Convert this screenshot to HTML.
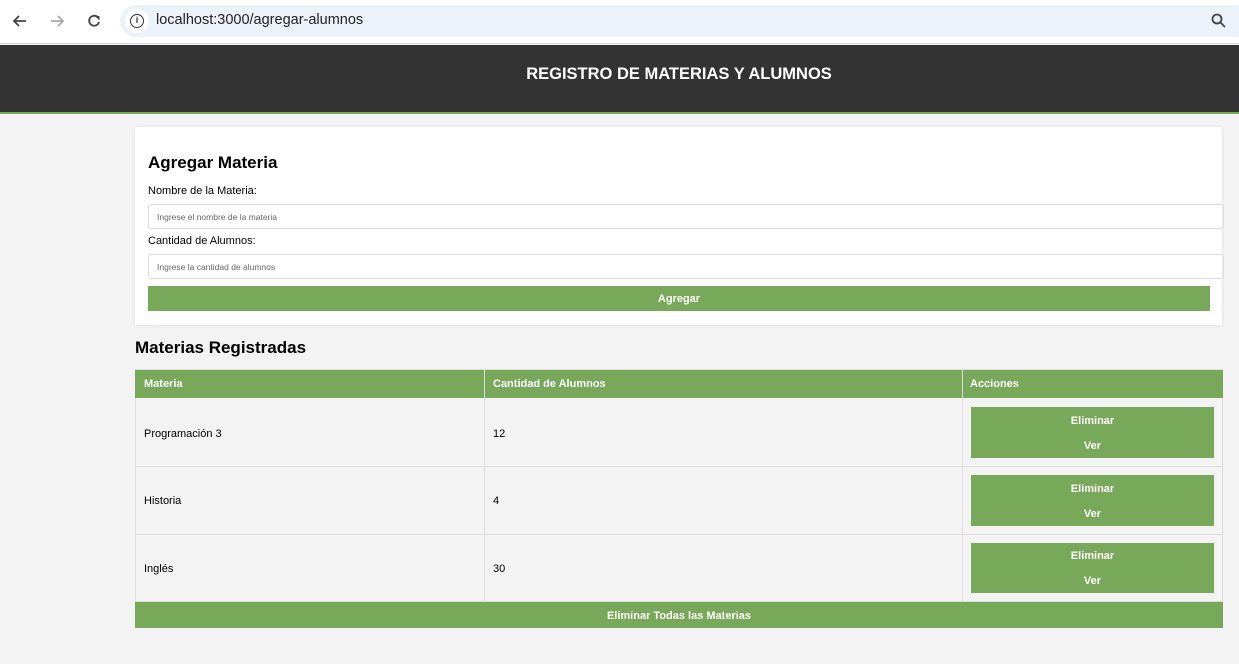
<!DOCTYPE html>
<html><head><meta charset="utf-8"><style>
*{box-sizing:border-box;margin:0;padding:0}
body{width:1239px;height:664px;background:#f3f3f3;font-family:"Liberation Sans",Arial,sans-serif;position:relative;overflow:hidden}
.a{position:absolute}
.g{background:#78a95a;color:#fff}
.t{font-size:11px}
.b{font-weight:bold}
</style></head><body>
<div class="a" style="left:0;top:0;width:1239px;height:44px;background:#fff;border-bottom:1px solid #d8d8d8"></div>
<svg class="a" style="left:10px;top:11px" width="100" height="20" viewBox="0 0 100 20">
<path d="M16 10H4M9 5L4 10L9 15" stroke="#444" stroke-width="1.8" fill="none"/>
<path d="M41 10H53M48 5L53 10L48 15" stroke="#aaa" stroke-width="1.8" fill="none"/>
<path d="M88 6.5A5 5 0 1 0 89 11" stroke="#444" stroke-width="1.8" fill="none"/><path d="M85 5H89.5V9.5Z" fill="#444"/>
</svg>
<div class="a" style="left:120px;top:5px;width:1119px;height:32px;background:#edf2fa;border-radius:16px 0 0 16px"></div>
<div class="a" style="left:125px;top:9px;width:24px;height:24px;border-radius:12px;background:#fff"></div>
<div class="a" style="left:130px;top:14px;width:14px;height:14px;border:1.6px solid #333;border-radius:50%;font-size:9px;font-weight:bold;text-align:center;line-height:11px;color:#333">i</div>
<div class="a" style="left:156px;top:12px;font-size:14.5px;color:#222">localhost:3000/agregar-alumnos</div>
<svg class="a" style="left:1211px;top:13px" width="16" height="16"><circle cx="6" cy="6" r="4.5" stroke="#444" stroke-width="1.8" fill="none"/><path d="M9.5 9.5L14 14" stroke="#444" stroke-width="1.8"/></svg>
<div class="a" style="left:0;top:45px;width:1239px;height:67px;background:#333"></div>
<div class="a" style="left:0;top:112px;width:1239px;height:2px;background:#78a95a"></div>
<div class="a" style="left:0;top:65px;width:1358px;text-align:center;color:#fff;font-weight:bold;font-size:16.5px">REGISTRO DE MATERIAS Y ALUMNOS</div>
<div class="a" style="left:135px;top:127px;width:1087px;height:198px;background:#fff;box-shadow:0 0 4px rgba(0,0,0,.08)"></div>
<div class="a" style="left:148px;top:153px;font-size:17px;font-weight:bold">Agregar Materia</div>
<div class="a" style="left:148px;top:185px;font-size:11px">Nombre de la Materia:</div>
<div class="a" style="left:148px;top:204px;width:1076px;height:25px;border:1px solid #ddd;border-radius:3px;font-size:8.5px;color:#666;padding:7px 8px">Ingrese el nombre de la materia</div>
<div class="a" style="left:148px;top:235px;font-size:11px">Cantidad de Alumnos:</div>
<div class="a" style="left:148px;top:254px;width:1076px;height:25px;border:1px solid #ddd;border-radius:3px;font-size:8.5px;color:#666;padding:7px 8px">Ingrese la cantidad de alumnos</div>
<div class="a g t b" style="left:148px;top:286px;width:1062px;height:25px;text-align:center;line-height:27px">Agregar</div>
<div class="a" style="left:135px;top:338px;font-size:17px;font-weight:bold">Materias Registradas</div>
<div class="a" style="left:135px;top:369px;width:1088px;height:233px;border:1px solid #ddd;background:#f3f3f3"></div>
<div class="a g" style="left:135px;top:370px;width:1088px;height:28px"></div>
<div class="a" style="left:484px;top:370px;width:1px;height:232px;background:#ddd"></div>
<div class="a" style="left:962px;top:370px;width:1px;height:232px;background:#ddd"></div>
<div class="a" style="left:135px;top:466px;width:1088px;height:1px;background:#ddd"></div>
<div class="a" style="left:135px;top:534px;width:1088px;height:1px;background:#ddd"></div>
<div class="a t" style="left:144px;top:378px;color:#fff;font-weight:bold">Materia</div>
<div class="a t" style="left:493px;top:378px;color:#fff;font-weight:bold">Cantidad de Alumnos</div>
<div class="a t" style="left:970px;top:378px;color:#fff;font-weight:bold">Acciones</div>
<div class="a t" style="left:144px;top:428px">Programación 3</div><div class="a t" style="left:493px;top:428px">12</div>
<div class="a t" style="left:144px;top:495px">Historia</div><div class="a t" style="left:493px;top:495px">4</div>
<div class="a t" style="left:144px;top:563px">Inglés</div><div class="a t" style="left:493px;top:563px">30</div>
<div class="a g t b" style="left:971px;top:407px;width:243px;height:51px;text-align:center;line-height:25px;padding-top:2px">Eliminar<br>Ver</div>
<div class="a g t b" style="left:971px;top:475px;width:243px;height:51px;text-align:center;line-height:25px;padding-top:2px">Eliminar<br>Ver</div>
<div class="a g t b" style="left:971px;top:543px;width:243px;height:50px;text-align:center;line-height:25px;padding-top:1px">Eliminar<br>Ver</div>
<div class="a g t b" style="left:135px;top:602px;width:1088px;height:26px;text-align:center;line-height:28px">Eliminar Todas las Materias</div>
</body></html>
